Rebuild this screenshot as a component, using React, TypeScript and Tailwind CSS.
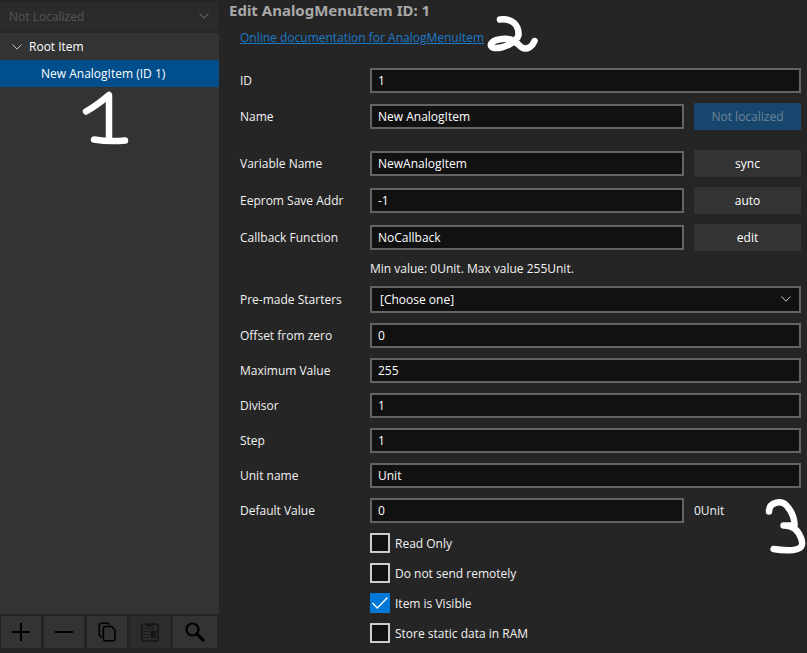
import { useState, type ReactNode } from "react";

const FIELD =
  "h-[25px] w-full min-w-0 border-2 border-[#646464] bg-[#111111] px-1.5 text-white outline-none";
const ACTION = "h-[27px] w-full bg-[#333333] text-white";
const TOOL = "flex h-8 flex-1 items-center justify-center bg-[#333333]";

function Chevron({ className }: { className: string }) {
  return (
    <svg viewBox="0 0 10 6" width="10" height="6" fill="none" stroke="currentColor" className={className} aria-hidden="true">
      <path d="M0.5 0.5 L5 5.2 L9.5 0.5" />
    </svg>
  );
}

type RowProps = { id: string; label: string; value: string; action?: ReactNode };

function Row({ id, label, value, action }: RowProps) {
  return (
    <>
      <label htmlFor={id}>{label}</label>
      <div className={action ? "flex" : "col-span-2 flex"}>
        <input id={id} type="text" defaultValue={value} className={FIELD} />
      </div>
      {action}
    </>
  );
}

function Tick({ label, initial = false }: { label: string; initial?: boolean }) {
  const [on, setOn] = useState(initial);
  return (
    <label className="col-span-2 col-start-2 flex h-5 items-center gap-[5px]">
      <span className="relative flex">
        <input
          type="checkbox"
          checked={on}
          onChange={() => setOn(!on)}
          className="size-5 appearance-none border-2 border-[#cccccc] bg-[#111111] checked:border-[#0078d7] checked:bg-[#0078d7]"
        />
        {on && (
          <svg viewBox="0 0 20 20" className="pointer-events-none absolute inset-0 size-5" fill="none" stroke="#ffffff" strokeWidth="1.4" aria-hidden="true">
            <path d="M2.5 10 L7.3 15 L17.5 4.5" />
          </svg>
        )}
      </span>
      {label}
    </label>
  );
}

function Sidebar() {
  return (
    <aside className="flex w-[219px] shrink-0 flex-col">
      <div className="relative my-0.5 flex">
        <select
          disabled
          aria-label="Locale"
          className="h-[29px] w-full appearance-none bg-[#2b2b2b] px-[9px] text-[#575757] opacity-100"
        >
          <option>Not Localized</option>
        </select>
        <Chevron className="pointer-events-none absolute top-[11px] right-2.5 text-[#777777]" />
      </div>
      <ul className="flex-1 bg-[#333333] text-white" role="tree">
        <li role="treeitem" aria-expanded="true">
          <div className="flex h-[27px] items-center gap-[7px] pl-3">
            <Chevron className="text-[#cccccc]" />
            Root Item
          </div>
          <ul role="group">
            <li role="treeitem" aria-selected="true" className="flex h-[27px] items-center bg-[#004e8c] pl-[41px]">
              New AnalogItem (ID 1)
            </li>
          </ul>
        </li>
      </ul>
      <div className="flex gap-[3px] pt-0.5 pr-0.5 pb-[5px] pl-px text-black">
        <button type="button" aria-label="Add" className={TOOL}>
          <svg width="18" height="18" viewBox="0 0 18 18" stroke="currentColor" strokeWidth="2">
            <path d="M9 0V18M0 9H18" />
          </svg>
        </button>
        <button type="button" aria-label="Remove" className={TOOL}>
          <svg width="18" height="18" viewBox="0 0 18 18" stroke="currentColor" strokeWidth="2">
            <path d="M0 9H18" />
          </svg>
        </button>
        <button type="button" aria-label="Copy" className={TOOL}>
          <svg width="18" height="20" viewBox="0 0 18 20" fill="none" stroke="currentColor" strokeWidth="1.6">
            <path d="M8 4.5H13.500L17 8V16.500Q17 18.800 14.700 18.800H7.500Q5.300 18.800 5.300 16.500V7Q5.300 4.500 8 4.500Z" />
            <path d="M3.600 15.500L1.200 13V4Q1.200 1.200 4 1.200H10L11.500 2.600" />
          </svg>
        </button>
        <button type="button" aria-label="Paste" disabled className="flex h-8 flex-1 items-center justify-center bg-[#2c2c2c] text-[#161616]">
          <svg width="18" height="20" viewBox="0 0 18 20" fill="none" stroke="currentColor" strokeWidth="1.6">
            <rect x="1" y="2.2" width="16" height="16.8" rx="1" />
            <path d="M5.500 1H7.500L9 2L10.500 1H12.500V4.500H5.500Z M9.500 8.500H15V16H9.500Z" fill="currentColor" stroke="none" />
            <path d="M3.500 6.500H5M6 6.500H10M11 6.500H14M3.500 9.500H5M6 9.500H8M3.500 12.500H8M3.500 15.500H5M6 15.500H8" strokeWidth="1.2" />
          </svg>
        </button>
        <button type="button" aria-label="Search" className="flex h-8 w-11 items-center justify-center bg-[#333333]">
          <svg width="20" height="20" viewBox="0 0 20 20" fill="none" stroke="currentColor">
            <circle cx="7.5" cy="7.5" r="6" strokeWidth="2.2" />
            <path d="M11.8 11.8L18 18" strokeWidth="3.2" strokeLinecap="round" />
          </svg>
        </button>
      </div>
    </aside>
  );
}

export default function App() {
  return (
    <div className="relative flex min-h-screen bg-[#252525] font-['Open_Sans','Noto_Sans',sans-serif] text-[12px] leading-[15px] text-[#f2f2f2]">
      <Sidebar />
      <main className="min-w-0 flex-1 pr-1.5 pl-2.5">
        <h1 className="font-['Noto_Sans','Open_Sans',sans-serif] text-[15px] leading-5 font-bold text-[#a8a8a8]">
          Edit AnalogMenuItem ID: 1
        </h1>
        <div className="flex h-12 items-start pt-2.5 pl-[11px]">
          <a href="#documentation" className="text-[#1a7bc9] underline">
            Online documentation for AnalogMenuItem
          </a>
        </div>
        <form className="grid grid-cols-[120px_minmax(0,1fr)_107px] items-center gap-2.5 pb-2.5 pl-[11px]">
          <Row id="item-id" label="ID" value="1" />
          <Row
            id="item-name"
            label="Name"
            value="New AnalogItem"
            action={
              <button type="button" disabled className="h-[27px] w-full bg-[#16466e] text-[#718495]">
                Not localized
              </button>
            }
          />
          <div className="col-span-3" />
          <Row id="variable" label="Variable Name" value="NewAnalogItem" action={<button type="button" className={ACTION}>sync</button>} />
          <Row id="eeprom" label="Eeprom Save Addr" value="-1" action={<button type="button" className={ACTION}>auto</button>} />
          <Row id="callback" label="Callback Function" value="NoCallback" action={<button type="button" className={ACTION}>edit</button>} />
          <p className="col-span-2 col-start-2">Min value: 0Unit. Max value 255Unit.</p>
          <label htmlFor="starter">Pre-made Starters</label>
          <div className="relative col-span-2 flex">
            <select
              id="starter"
              className="h-[27px] w-full appearance-none border-2 border-[#646464] bg-[#111111] px-2 text-white outline-none"
            >
              <option>[Choose one]</option>
            </select>
            <Chevron className="pointer-events-none absolute top-2.5 right-2.5 text-[#cccccc]" />
          </div>
          <Row id="offset" label="Offset from zero" value="0" />
          <Row id="maximum" label="Maximum Value" value="255" />
          <Row id="divisor" label="Divisor" value="1" />
          <Row id="step" label="Step" value="1" />
          <Row id="unit" label="Unit name" value="Unit" />
          <Row id="default" label="Default Value" value="0" action={<output htmlFor="default">0Unit</output>} />
          <Tick label="Read Only" />
          <Tick label="Do not send remotely" />
          <Tick label="Item is Visible" initial />
          <Tick label="Store static data in RAM" />
        </form>
      </main>
      <svg
        className="pointer-events-none absolute top-0 left-0"
        width="807"
        height="653"
        viewBox="0 0 807 653"
        fill="none"
        stroke="#ffffff"
        strokeWidth="6.5"
        strokeLinecap="round"
        strokeLinejoin="round"
        aria-hidden="true"
      >
        <path d="M86 111.500C94 107 102 101 109 95V139M94 139.500C103 141 115 141.500 125 140.500" />
        <path d="M500 19.500C512 18 519 25 518.500 35C517 42 503 49 494 48C488 46 491 41 499 39.500C509 37.500 514 40 519 45C524 51 531 49 534.500 41" />
        <path d="M769 511.500C769 502 781 500 786 505C792 511 795 520 794.500 525.500H783.500C792 525 798 530 801 538C804 546 801 549 793 550C786 550.500 779 550 773.500 549" />
      </svg>
    </div>
  );
}
